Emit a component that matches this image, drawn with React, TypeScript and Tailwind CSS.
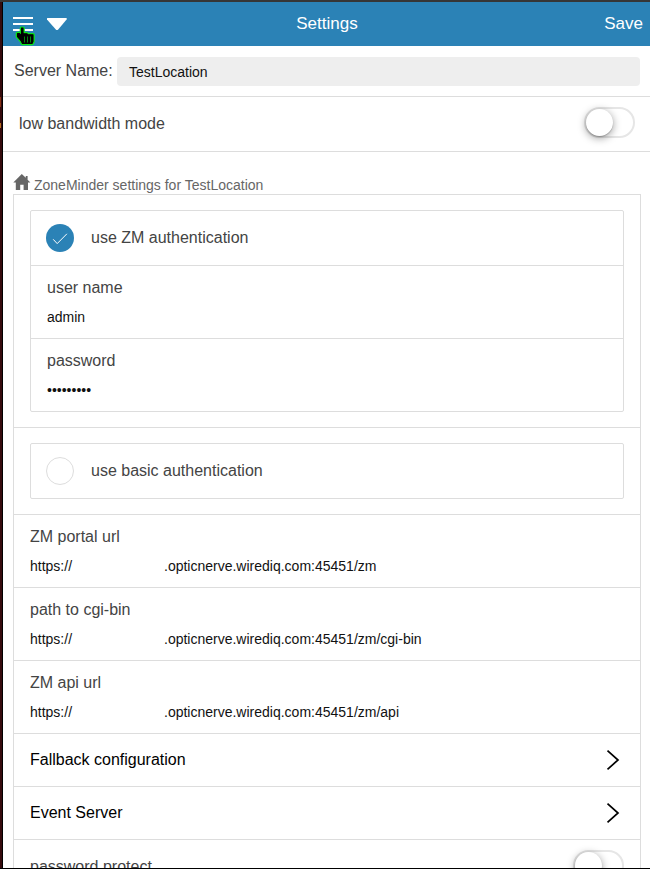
import type { ReactNode } from "react";

function Toggle() {
  return (
    <div className="h-[31px] w-[51px] rounded-full border-2 border-[#e6e6e6] bg-white">
      <div className="h-[27px] w-[27px] rounded-full bg-white shadow-[0_2px_8px_rgba(0,0,0,0.4),0_1px_1px_rgba(0,0,0,0.2)]" />
    </div>
  );
}

function CheckRow({ label, checked }: { label: string; checked?: boolean }) {
  return (
    <div className="flex h-[54px] items-center gap-[17px] pl-[15px]">
      {checked ? (
        <svg width="28" height="28" viewBox="0 0 28 28">
          <circle cx="14" cy="14" r="14" fill="#2b82b6" />
          <path d="M7.2 15.3 L11.2 19.6 L20.9 9.8" fill="none" stroke="#fff" strokeWidth="1" />
        </svg>
      ) : (
        <div className="h-7 w-7 rounded-full border border-[#ddd]" />
      )}
      <span className="text-base leading-5">{label}</span>
    </div>
  );
}

function Field({ label, children }: { label: string; children: ReactNode }) {
  return (
    <div className="h-[73px] border-t border-[#ddd] pl-4 pt-3">
      <div className="text-base leading-5">{label}</div>
      <div className="mt-[9px] flex text-sm leading-5 text-[#111]">{children}</div>
    </div>
  );
}

function Url({ path }: { path: string }) {
  return (
    <>
      <span className="w-[134px]">https://</span>
      <span>.opticnerve.wirediq.com:45451{path}</span>
    </>
  );
}

function LinkRow({ label }: { label: string }) {
  return (
    <div className="flex h-[53px] items-center justify-between border-t border-[#ddd] pl-4 pr-5 text-base text-black">
      <span className="leading-5">{label}</span>
      <svg width="14" height="20" viewBox="0 0 14 20">
        <path d="M1.5 0.7 L12 10 L1.5 19.3" fill="none" stroke="#000" strokeWidth="1.7" />
      </svg>
    </div>
  );
}

export default function App() {
  return (
    <div className="relative flex h-[869px] w-[650px] flex-col overflow-hidden border-b border-black bg-white font-['Liberation_Sans',Arial,sans-serif] text-[#444]">
      <div className="h-[2px] shrink-0 bg-[#363636]" />
      <div className="flex min-h-0 flex-1">
        <div className="w-[3px] shrink-0 border-r border-black bg-[#350b0d]">
          <div className="mt-[95px] h-[10px] w-px bg-[#853014]" />
          <div className="mt-[16px] h-[5px] w-px bg-[#b66b20]" />
        </div>
        <div className="min-w-0 flex-1">
          <header className="flex h-11 items-center justify-between bg-[#2b82b6] pl-[10px] pr-[7px] text-[17px] text-white">
            <div className="flex flex-1 items-center gap-[13px]">
              <svg width="21" height="16" viewBox="0 0 21 16" fill="#fff">
                <path d="M0 1h20v2H0zM0 7h20v2H0zM0 13h20v2H0z" />
              </svg>
              <svg width="22" height="14" viewBox="0 0 22 14" fill="#fff">
                <path d="M.7 1h18.2q1.5 0 .7 1.4L11.2 12.5q-1.2 1.2-2.4 0L0 2.4Q-.8 1 .7 1" />
              </svg>
            </div>
            <div className="mr-px">Settings</div>
            <div className="flex-1 pl-[1px] text-right">Save</div>
          </header>
          <div className="flex h-[51px] border-b border-[#ddd] pl-[11px] pt-[11px]">
            <span className="w-[103px] text-base leading-7">Server Name:</span>
            <div className="h-[29px] w-[523px] rounded bg-[#eee] pl-3 text-sm leading-[30px] text-[#111]">TestLocation</div>
          </div>
          <div className="flex h-[55px] items-center justify-between border-b border-[#ddd] pl-4 pr-[15px] pb-px">
            <span className="text-base">low bandwidth mode</span>
            <div className="mt-[-2px]"><Toggle /></div>
          </div>
          <div className="flex h-[42px] items-end gap-[3px] pl-[10px] text-sm leading-[18px] text-[#666]">
            <svg className="mb-[4px]" width="18" height="16" viewBox="0 0 18 16" fill="#666">
              <path d="M8.8 0L.3 8.6h2.5V16h4.4v-5.2h3.4V16H15V8.6h2.4l-2.8-2.9V2h-1.8v1.8z" />
            </svg>
            <span>ZoneMinder settings for TestLocation</span>
          </div>
          <div className="ml-[10px] w-[628px] border border-[#ddd]">
            <div className="h-[232px] px-4 pt-[15px]">
              <div className="rounded-[2px] border border-[#ddd]">
                <CheckRow label="use ZM authentication" checked />
                <Field label="user name">admin</Field>
                <Field label="password">•••••••••</Field>
              </div>
            </div>
            <div className="h-[87px] border-t border-[#ddd] px-4 pt-[15px]">
              <div className="rounded-[2px] border border-[#ddd]">
                <CheckRow label="use basic authentication" />
              </div>
            </div>
            <Field label="ZM portal url"><Url path="/zm" /></Field>
            <Field label="path to cgi-bin"><Url path="/zm/cgi-bin" /></Field>
            <Field label="ZM api url"><Url path="/zm/api" /></Field>
            <LinkRow label="Fallback configuration" />
            <LinkRow label="Event Server" />
            <div className="flex h-[55px] items-start justify-between border-t border-[#ddd] pl-4 pr-4 pt-[10px]">
              <span className="mt-[7px] text-base leading-5">password protect</span>
              <Toggle />
            </div>
          </div>
        </div>
      </div>
      <svg className="absolute left-[14px] top-[25px]" width="22" height="22" viewBox="0 0 22 22">
        <g strokeLinejoin="round">
          <path d="M7.5 3.2H9v5.6h4l1 1h5v6.7l-1 2H8.5l-1.5-3-3.5-4V8.5h1.7L7.5 11z" stroke="#0ae916" strokeWidth="3.6" />
          <path d="M7.5 3.2H9v5.6h4l1 1h5v6.7l-1 2H8.5l-1.5-3-3.5-4V8.5h1.7L7.5 11z" fill="#000" stroke="#000" strokeWidth="1.2" />
        </g>
        <path d="M10.5 11.5v6M13.5 11.5v6M16.5 11.5v6" stroke="#00880c" strokeWidth="1" />
      </svg>
    </div>
  );
}
